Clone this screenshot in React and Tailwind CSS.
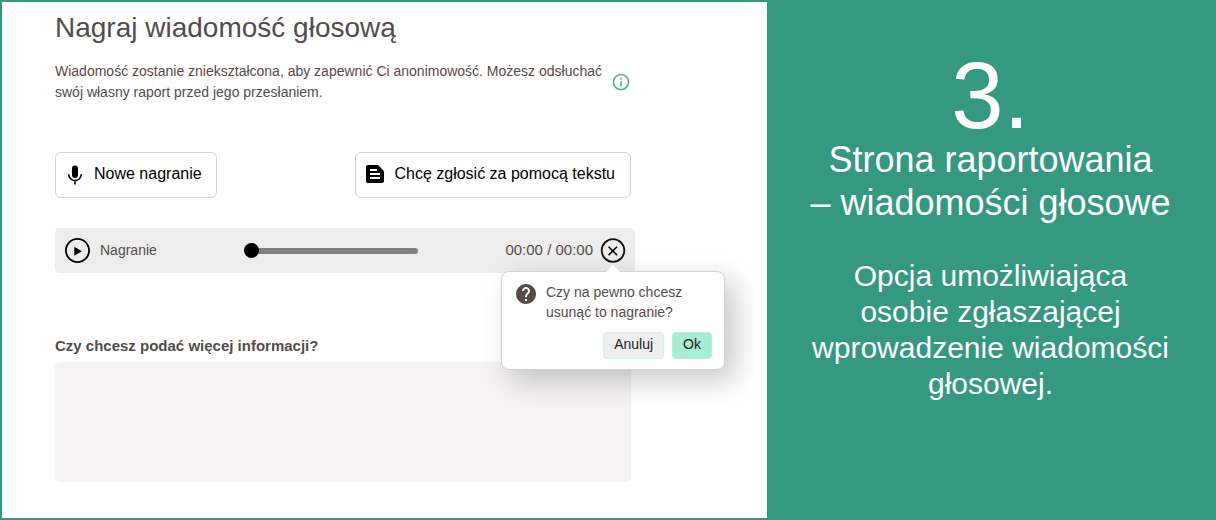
import React, { useState } from "react";
import { MdHelp, MdInfoOutline, MdTextSnippet } from "react-icons/md";

const MicIcon = () => (
  <svg viewBox="0 0 24 24" className="w-6 h-6" aria-hidden="true">
    <rect x="9" y="3.5" width="6" height="12.5" rx="3" fill="#000" />
    <path d="M5.7 12.3a6.3 6.3 0 0 0 12.6 0M12 18.6v4" fill="none" stroke="#000" strokeWidth="1.6" />
  </svg>
);

const PlayIcon = () => (
  <svg viewBox="0 0 26 26" className="w-[26px] h-[26px]" aria-hidden="true">
    <circle cx="13.5" cy="12.5" r="11.6" fill="none" stroke="#000" strokeWidth="1.8" />
    <path d="M10.3 8.8v9l7.5-4.5z" fill="#000" />
  </svg>
);

const CloseIcon = () => (
  <svg viewBox="0 0 26 26" className="w-[26px] h-[26px]" aria-hidden="true">
    <circle cx="13" cy="12.5" r="11.3" fill="none" stroke="#111" strokeWidth="1.8" />
    <path d="M8.6 8.7l8.4 8.4M17 8.7l-8.4 8.4" stroke="#000" strokeWidth="1.5" />
  </svg>
);

const ConfirmPopover = ({ onClose }) => (
  <div
    role="dialog"
    aria-label="Usuń nagranie"
    className="absolute top-[33px] -right-[99px] w-[224px] rounded-lg border border-[#d2d2d2] bg-white py-[10px] px-3 shadow-[10px_10px_28px_rgba(0,0,0,0.22)]"
  >
    <svg viewBox="0 0 16 8" className="absolute -top-[7px] left-[103px] w-4 h-2" aria-hidden="true">
      <path d="M0 8l8-8 8 8z" fill="#fff" />
    </svg>
    <div className="flex items-start gap-2">
      <MdHelp className="w-6 h-6 shrink-0 text-[#574b49]" />
      <p className="text-[14px] leading-5 text-[#574b49]">
        Czy na pewno chcesz
        <br />
        usunąć to nagranie?
      </p>
    </div>
    <div className="mt-[10px] flex justify-end gap-2">
      <button
        type="button"
        onClick={onClose}
        className="h-[27px] px-[10px] pb-[2px] rounded border border-[#d2f3e6] bg-[#efefef] text-[14px] leading-5 text-[#222]"
      >
        Anuluj
      </button>
      <button
        type="button"
        onClick={onClose}
        className="h-[27px] px-[10px] pb-[2px] rounded border border-[#b4f1da] bg-[#a6edd3] text-[14px] leading-5 text-[#222]"
      >
        Ok
      </button>
    </div>
  </div>
);

const Player = () => {
  const [position, setPosition] = useState(0);
  const [confirming, setConfirming] = useState(true);

  return (
    <div className="mt-[30px] -mr-1 h-[45px] flex items-center rounded-[5px] bg-[#ededed] px-[9px]">
      <button type="button" aria-label="Odtwórz">
        <PlayIcon />
      </button>
      <label htmlFor="seek" className="ml-[10px] w-[144px] text-[14px] text-[#574b49]">
        Nagranie
      </label>
      <input
        id="seek"
        type="range"
        min="0"
        max="100"
        value={position}
        onChange={(e) => setPosition(Number(e.target.value))}
        className="w-[174px] h-[6px] appearance-none rounded-full bg-[#808080] [&::-webkit-slider-thumb]:appearance-none [&::-webkit-slider-thumb]:w-[15px] [&::-webkit-slider-thumb]:h-[15px] [&::-webkit-slider-thumb]:rounded-full [&::-webkit-slider-thumb]:bg-black"
      />
      <span className="flex-1 pr-[7px] text-right text-[15px] text-[#574b49]">00:00 / 00:00</span>
      <div className="relative h-[26px]">
        <button type="button" aria-label="Usuń" onClick={() => setConfirming(true)}>
          <CloseIcon />
        </button>
        {confirming && <ConfirmPopover onClose={() => setConfirming(false)} />}
      </div>
    </div>
  );
};

const Recorder = () => (
  <main className="bg-white pl-[53px] pr-10 pt-2 pb-9">
    <div className="max-w-[576px]">
      <h1 className="text-[28px] leading-9 text-[#574b49]">Nagraj wiadomość głosową</h1>
      <div className="mt-[15px] flex items-center justify-between">
        <p className="text-[14px] leading-[21px] text-[#574b49]">
          Wiadomość zostanie zniekształcona, aby zapewnić Ci anonimowość. Możesz odsłuchać
          <br />
          swój własny raport przed jego przesłaniem.
        </p>
        <MdInfoOutline className="w-5 h-5 shrink-0 text-[#4db39a]" />
      </div>

      <div className="mt-[49px] flex justify-between">
        <button
          type="button"
          className="h-[46px] flex items-center gap-[7px] rounded-md border border-[#d2d2d2] pl-[7px] pr-[14px] pb-[2px] text-[16px] text-black"
        >
          <MicIcon />
          Nowe nagranie
        </button>
        <button
          type="button"
          className="h-[46px] flex items-center gap-[7px] rounded-md border border-[#d2d2d2] pl-[7px] pr-[15px] pb-[2px] text-[16px] text-black"
        >
          <MdTextSnippet className="w-6 h-6" />
          Chcę zgłosić za pomocą tekstu
        </button>
      </div>

      <Player />

      <label htmlFor="details" className="mt-[62px] block text-[15px] leading-[22px] font-bold text-[#574b49]">
        Czy chcesz podać więcej informacji?
      </label>
      <textarea
        id="details"
        className="mt-[5px] block h-[120px] w-full resize-none rounded-[5px] bg-[#f4f2f3] p-3 text-[14px] outline-none"
      />
    </div>
  </main>
);

const Caption = () => (
  <aside className="pt-[52px] px-4 text-center text-white">
    <h2 className="text-[36px] leading-[43px]">
      <span className="block text-[94px] leading-[84px]">3.</span>
      Strona raportowania
      <br />– wiadomości głosowe
    </h2>
    <p className="mt-[34px] text-[30px] leading-9">
      Opcja umożliwiająca
      <br />
      osobie zgłaszającej
      <br />
      wprowadzenie wiadomości
      <br />
      głosowej.
    </p>
  </aside>
);

const App = () => (
  <div className="min-h-screen grid grid-cols-[765fr_447fr] bg-[#359881] p-[2px] font-['Liberation_Sans',Arial,sans-serif]">
    <Recorder />
    <Caption />
  </div>
);

export default App;
